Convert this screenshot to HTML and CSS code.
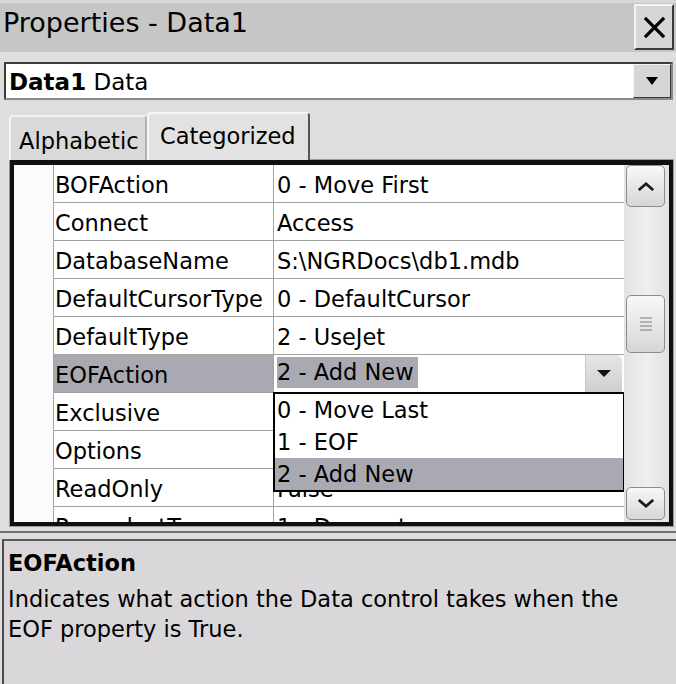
FILE: index.html
```html
<!DOCTYPE html>
<html>

<head>
    <title>Properties - Data1</title>
    <meta charset="utf-8">
    <link rel="stylesheet" href="styles.css">
</head>

<body>
    <div class="titlebar">
        <div class="title">Properties - Data1</div>
        <div class="close-button">
            <svg viewBox="0 0 24 24">
                <path d="M2 2 L22 22 M22 2 L2 22" />
            </svg>
        </div>
    </div>

    <div class="object-box">
        <div class="object-name"><b>Data1</b> Data</div>
        <div class="drop-button">
            <svg viewBox="0 0 12 8">
                <path d="M0 0 H12 L6 8 Z" />
            </svg>
        </div>
    </div>

    <div class="tabs">
        <div class="tab">Alphabetic</div>
        <div class="tab active">Categorized</div>
    </div>

    <div class="grid">
        <div class="rows">
            <div class="row">
                <div class="gutter"></div>
                <div class="name">BOFAction</div>
                <div class="value">0 - Move First</div>
            </div>
            <div class="row">
                <div class="gutter"></div>
                <div class="name">Connect</div>
                <div class="value">Access</div>
            </div>
            <div class="row">
                <div class="gutter"></div>
                <div class="name">DatabaseName</div>
                <div class="value">S:\NGRDocs\db1.mdb</div>
            </div>
            <div class="row">
                <div class="gutter"></div>
                <div class="name">DefaultCursorType</div>
                <div class="value">0 - DefaultCursor</div>
            </div>
            <div class="row">
                <div class="gutter"></div>
                <div class="name">DefaultType</div>
                <div class="value">2 - UseJet</div>
            </div>
            <div class="row selected">
                <div class="gutter"></div>
                <div class="name">EOFAction</div>
                <div class="value editing">
                    <span class="edit-text">2 - Add New</span>
                    <span class="cell-button">
                        <svg viewBox="0 0 14 7">
                            <path d="M0 0 H14 L7 7 Z" />
                        </svg>
                    </span>
                </div>
            </div>
            <!-- values of the next two rows sit under the open list -->
            <div class="row">
                <div class="gutter"></div>
                <div class="name">Exclusive</div>
                <div class="value"></div>
            </div>
            <div class="row">
                <div class="gutter"></div>
                <div class="name">Options</div>
                <div class="value"></div>
            </div>
            <div class="row">
                <div class="gutter"></div>
                <div class="name">ReadOnly</div>
                <div class="value">False</div>
            </div>
            <div class="row">
                <div class="gutter"></div>
                <div class="name">RecordsetType</div>
                <div class="value">1 - Dynaset</div>
            </div>

            <!-- open list of the EOFAction value -->
            <div class="drop-list">
                <div class="drop-item">0 - Move Last</div>
                <div class="drop-item">1 - EOF</div>
                <div class="drop-item current">2 - Add New</div>
            </div>
        </div>

        <div class="scrollbar">
            <div class="scroll-button">
                <svg viewBox="0 0 20 10">
                    <path d="M2 9 L10 2 L18 9" />
                </svg>
            </div>
            <div class="track">
                <div class="thumb">
                    <svg viewBox="0 0 12 14">
                        <path d="M0 1 H12 M0 5 H12 M0 9 H12 M0 13 H12" />
                    </svg>
                </div>
            </div>
            <div class="scroll-button down">
                <svg viewBox="0 0 20 10">
                    <path d="M2 1 L10 8 L18 1" />
                </svg>
            </div>
        </div>
    </div>

    <div class="splitter"></div>

    <div class="description">
        <div class="description-title">EOFAction</div>
        <div class="description-text">Indicates what action the Data control takes when the EOF property is True.</div>
    </div>
</body>

</html>
```

FILE: styles.css
```css
:root {
    --window-bg: #dedede;
    --title-bg: #c6c6c6;
    --face: #d6d6d6;
    --line: #a2a2a2;
    --select: #a9a9b2;
    --panel-bg: #d9d7d9;
}

body {
    margin: 0;
    width: 676px;
    height: 684px;
    overflow: hidden;
    background: var(--window-bg);
    font-family: 'DejaVu Sans', 'Liberation Sans', sans-serif;
    font-size: 22.5px;
    color: #000;
}

/* -- title bar -- */
.titlebar {
    display: flex;
    justify-content: space-between;
    height: 49px;
    border-top: 3px solid #d8d8d8;
    background: var(--title-bg);
}

.title {
    font-size: 27px;
    line-height: 32px;
    padding: 4px 0 0 3px;
}

.close-button {
    width: 36px;
    height: 42px;
    margin: 1px 2px 0 0;
    background: var(--face);
    border: 2px solid;
    border-color: #f4f4f4 #3a3a3a #3a3a3a #f4f4f4;
    display: flex;
    align-items: center;
    justify-content: center;
}

.close-button svg {
    width: 23px;
    height: 23px;
    stroke: #000;
    stroke-width: 3.4;
    fill: none;
}

/* -- object combo -- */
.object-box {
    display: flex;
    justify-content: space-between;
    height: 34px;
    margin: 10px 3px 0 4px;
    background: #fff;
    border: 2px solid;
    border-color: #3c3c3c #8a8a8a #8a8a8a #3c3c3c;
}

.object-name {
    font-size: 23px;
    line-height: 34px;
    padding: 1px 0 0 3px;
}

.drop-button {
    width: 36px;
    height: 32px;
    background: var(--face);
    border: 1px solid;
    border-color: #f4f4f4 #3a3a3a #3a3a3a #f4f4f4;
    display: flex;
    align-items: center;
    justify-content: center;
}

.drop-button svg {
    width: 12px;
    height: 8px;
    fill: #000;
}

/* -- tabs -- */
.tabs {
    display: flex;
    align-items: flex-end;
    height: 50px;
    margin-top: 10px;
    padding-left: 9px;
}

.tab {
    box-sizing: border-box;
    width: 138px;
    height: 45px;
    padding: 9px 0 0 8px;
    line-height: 30px;
    border: 2px solid;
    border-bottom: none;
    border-color: #f2f2f2 #b4b4b4 transparent #f2f2f2;
    border-radius: 4px 4px 0 0;
    background: #d9d9d9;
}

.tab.active {
    width: 163px;
    height: 48px;
    padding: 7px 0 0 11px;
    border-color: #f6f6f6 #555 transparent #f6f6f6;
    background: #e2e2e2;
}

/* -- property grid -- */
.grid {
    display: flex;
    height: 357px;
    margin: 0 3px 0 10px;
    border: 4px solid #101010;
    border-top-width: 5px;
    box-shadow: 0 0 0 1px #9a9a9a;
    background: #fff;
}

.rows {
    position: relative;
    width: 610px;
    overflow: hidden;
}

.row {
    display: flex;
    height: 38px;
}

.gutter {
    width: 39px;
    border-right: 1px solid var(--line);
    background: #fbfbfb;
}

.name,
.value {
    box-sizing: border-box;
    height: 38px;
    padding-top: 3px;
    line-height: 34px;
    border-bottom: 1px solid var(--line);
    white-space: nowrap;
    overflow: hidden;
}

.name {
    width: 220px;
    padding-left: 1px;
    border-right: 1px solid var(--line);
}

.value {
    flex: 1;
    padding-left: 3px;
}

.row.selected .name {
    background: var(--select);
}

.value.editing {
    display: flex;
    justify-content: space-between;
    padding: 2px 0 4px 3px;
    line-height: 31px;
}

.edit-text {
    padding-right: 4px;
    background: var(--select);
}

.cell-button {
    width: 36px;
    margin: -2px 2px -4px 0;
    border-left: 1px solid #c8c8c8;
    border-radius: 0 5px 0 0;
    background: linear-gradient(#e6e6e6, #cfcfcf);
    display: flex;
    align-items: center;
    justify-content: center;
}

.cell-button svg {
    width: 14px;
    height: 7px;
    fill: #111;
}

.drop-list {
    position: absolute;
    left: 259px;
    top: 227px;
    width: 348px;
    border: 2px solid #000;
    background: #fff;
}

.drop-item {
    height: 32px;
    padding: 1px 0 0 2px;
    box-sizing: border-box;
    line-height: 30px;
}

.drop-item.current {
    background: var(--select);
}

/* -- scrollbar -- */
.scrollbar {
    display: flex;
    flex-direction: column;
    width: 45px;
    box-sizing: border-box;
    padding: 0 4px 2px 2px;
    background: linear-gradient(90deg, #e2e2e2, #efefef 50%, #e2e2e2);
}

.scroll-button,
.thumb {
    box-sizing: border-box;
    border: 1px solid #8c8c8c;
    border-radius: 5px;
    background: linear-gradient(#f8f8f8, #d6d6d6);
    display: flex;
    align-items: center;
    justify-content: center;
}

.scroll-button {
    height: 42px;
}

.scroll-button.down {
    height: 33px;
}

.scroll-button svg {
    width: 18px;
    height: 9px;
    fill: none;
    stroke: #1a1a1a;
    stroke-width: 3;
}

.track {
    flex: 1;
}

.thumb {
    height: 58px;
    margin-top: 88px;
}

.thumb svg {
    width: 12px;
    height: 14px;
    stroke: #7a7a7a;
    stroke-width: 1.2;
}

/* -- description pane -- */
.splitter {
    height: 3px;
    margin-top: 2px;
    border-bottom: 2px solid #707070;
    margin-bottom: 6px;
}

.description {
    height: 150px;
    margin-left: 2px;
    padding: 5px 0 0 4px;
    border-top: 2px solid #5c5c5c;
    border-left: 2px solid #4a4a4a;
    background: var(--panel-bg);
}

.description-title {
    font-weight: bold;
    line-height: 34px;
}

.description-text {
    margin-top: 4px;
    line-height: 30px;
    width: 640px;
}
```
